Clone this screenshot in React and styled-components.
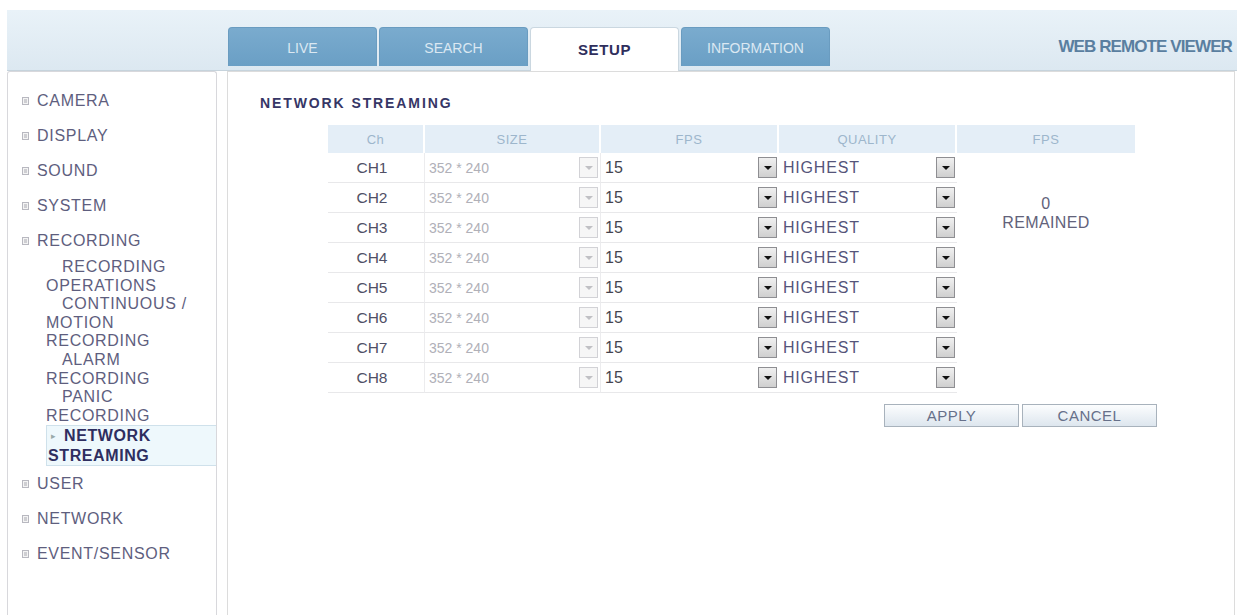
import React from "react";
import styled, { createGlobalStyle } from "styled-components";

const tabs = ["LIVE", "SEARCH", "SETUP", "INFORMATION"];
const channels = ["CH1", "CH2", "CH3", "CH4", "CH5", "CH6", "CH7", "CH8"];
const subItems = [
    ["RECORDING", "OPERATIONS"],
    ["CONTINUOUS /", "MOTION", "RECORDING"],
    ["ALARM", "RECORDING"],
    ["PANIC", "RECORDING"],
];

const PlusBox = () => (
    <svg width="7" height="8" viewBox="0 0 7 8">
        <rect x="0.5" y="0.5" width="6" height="7" fill="#f4f4f4" stroke="#b8b8c0" />
        <line x1="2" y1="3" x2="5" y2="3" stroke="#a8a8b0" />
        <line x1="2" y1="5" x2="5" y2="5" stroke="#a8a8b0" />
    </svg>
);

export default function App() {
    return <Page>
        <GlobalStyle />
        <Header>
            <Tabs>
                {tabs.map(t => <Tab key={t} $active={t === "SETUP"}>{t}</Tab>)}
            </Tabs>
            <Brand>WEB REMOTE VIEWER</Brand>
        </Header>
        <Body>
            <Sidebar>
                {["CAMERA", "DISPLAY", "SOUND", "SYSTEM", "RECORDING"].map(m => (
                    <MenuItem key={m}><PlusBox />{m}</MenuItem>
                ))}
                <SubList>
                    {subItems.map((lines, i) => (
                        <SubItem key={i}>
                            {lines.map((l, j) => <SubLine key={j} $first={j === 0}>{l}</SubLine>)}
                        </SubItem>
                    ))}
                    <SelectedItem>
                        <SubLine $first><Arrow>▸</Arrow>NETWORK</SubLine>
                        <SubLine>STREAMING</SubLine>
                    </SelectedItem>
                </SubList>
                {["USER", "NETWORK", "EVENT/SENSOR"].map(m => (
                    <MenuItem key={m}><PlusBox />{m}</MenuItem>
                ))}
            </Sidebar>
            <Main>
                <Title>NETWORK STREAMING</Title>
                <Table>
                    {["Ch", "SIZE", "FPS", "QUALITY", "FPS"].map((h, i) => (
                        <HeadCell key={i} $last={i === 4}>{h}</HeadCell>
                    ))}
                    {channels.map((ch, i) => (
                        <React.Fragment key={ch}>
                            <ChCell style={{gridRow: i + 2}}>{ch}</ChCell>
                            <SelectCell style={{gridRow: i + 2}} $muted $sep>
                                352 * 240<DropButton $disabled />
                            </SelectCell>
                            <SelectCell style={{gridRow: i + 2}}>
                                15<DropButton />
                            </SelectCell>
                            <SelectCell style={{gridRow: i + 2}} $quality>
                                HIGHEST<DropButton />
                            </SelectCell>
                        </React.Fragment>
                    ))}
                    <Remained>
                        <span>0</span>
                        <span>REMAINED</span>
                    </Remained>
                </Table>
                <Actions>
                    <ActionButton>APPLY</ActionButton>
                    <ActionButton>CANCEL</ActionButton>
                </Actions>
            </Main>
        </Body>
    </Page>
}

const GlobalStyle = createGlobalStyle`
    html, body {
        margin: 0;
        height: 100%;
        overflow: hidden;
        background: #fff;
    }
    body {
        font-family: "Liberation Sans", Arial, sans-serif;
    }
    #root {
        height: 100%;
    }
`;

const Page = styled.div`
    height: 100%;
    box-sizing: border-box;
    padding: 10px 0 0 7px;
    display: flex;
    flex-direction: column;
`;

const Header = styled.div`
    height: 60px;
    flex-shrink: 0;
    display: flex;
    align-items: flex-end;
    background: linear-gradient(#e9f2f8, #dce8f1);
    border-bottom: 1px solid #c6d3dc;
`;

const Tabs = styled.div`
    display: flex;
    gap: 2px;
    margin-left: 221px;
`;

const Tab = styled.div`
    width: 149px;
    height: ${p => p.$active ? 44 : 39}px;
    box-sizing: border-box;
    display: flex;
    align-items: center;
    justify-content: center;
    padding-top: ${p => p.$active ? 0 : 1}px;
    border-radius: 4px 4px 0 0;
    margin-bottom: ${p => p.$active ? -1 : 0}px;
    background: ${p => p.$active ? "#fff" : "linear-gradient(#7aabce, #6a9fc5)"};
    border: 1px solid ${p => p.$active ? "#cad7e0" : "#6a9cc0"};
    border-bottom: none;
    color: ${p => p.$active ? "#2e2e5c" : "#dbe8f2"};
    font-size: ${p => p.$active ? 15 : 14}px;
    font-weight: ${p => p.$active ? "bold" : "normal"};
    letter-spacing: ${p => p.$active ? 0.6 : 0}px;
`;

const Brand = styled.div`
    margin-left: auto;
    margin-bottom: 13px;
    padding-right: 5px;
    color: #5a7fa0;
    font-size: 17px;
    font-weight: bold;
    letter-spacing: -0.9px;
`;

const Body = styled.div`
    flex: 1;
    display: flex;
    gap: 10px;
    margin-right: 2px;
    min-height: 0;
`;

const Sidebar = styled.div`
    width: 210px;
    flex-shrink: 0;
    box-sizing: border-box;
    border: 1px solid #d8d8dc;
    border-bottom: none;
    border-radius: 3px 3px 0 0;
    padding-top: 11px;
    color: #5e5e7e;
    font-size: 16px;
    letter-spacing: 0.7px;
`;

const MenuItem = styled.div`
    height: 35px;
    display: flex;
    align-items: center;
    gap: 8px;
    padding-left: 14px;
`;

const SubList = styled.div`
    margin-left: 38px;
    line-height: 18.6px;
`;

const SubItem = styled.div``;

const SubLine = styled.div`
    padding-left: ${p => p.$first ? 16 : 0}px;
    white-space: nowrap;
`;

const SelectedItem = styled.div`
    border: 1px solid #cfe1eb;
    border-right: none;
    background: #eef8fc;
    color: #2e2e60;
    font-weight: bold;
    line-height: 19px;
    letter-spacing: 0.6px;
    padding-left: 1px;
    ${SubLine} {
        padding-left: 0;
    }
    ${SubLine}:first-child {
        padding-left: 3px;
    }
`;

const Arrow = styled.span`
    display: inline-block;
    width: 13px;
    color: #9aa;
    font-size: 9px;
    font-weight: normal;
    vertical-align: 2px;
`;

const Main = styled.div`
    flex: 1;
    box-sizing: border-box;
    border: 1px solid #dcdcdc;
    border-bottom: none;
    padding: 23px 0 0 32px;
`;

const Title = styled.div`
    font-size: 14px;
    line-height: 16px;
    font-weight: bold;
    color: #363666;
    letter-spacing: 1.9px;
`;

const Table = styled.div`
    margin: 14px 0 0 68px;
    display: grid;
    grid-template-columns: 97px 176px 178px 178px 178px;
    grid-template-rows: 28px repeat(8, 30px);
    width: max-content;
`;

const HeadCell = styled.div`
    display: flex;
    align-items: center;
    justify-content: center;
    background: #e4eef7;
    border-right: ${p => p.$last ? "none" : "2px solid #fff"};
    color: #9db6cc;
    font-size: 13px;
    letter-spacing: 0.5px;
`;

const ChCell = styled.div`
    grid-column: 1;
    display: flex;
    align-items: center;
    justify-content: center;
    padding-right: 8px;
    border-bottom: 1px solid #e8e8ea;
    border-right: 1px solid #ececee;
    color: #505066;
    font-size: 15.5px;
`;

const SelectCell = styled.div`
    display: flex;
    align-items: center;
    justify-content: space-between;
    padding: 0 2px 0 4px;
    border-bottom: 1px solid #e8e8ea;
    border-right: ${p => p.$sep ? "1px solid #ececee" : "none"};
    color: ${p => p.$muted ? "#b0b0b8" : p.$quality ? "#55557a" : "#44444f"};
    font-size: ${p => p.$muted ? 14 : 16}px;
    letter-spacing: ${p => p.$quality ? 0.8 : 0}px;
`;

const DropButton = styled.span`
    width: 19px;
    height: 21px;
    box-sizing: border-box;
    display: flex;
    align-items: center;
    justify-content: center;
    border: 1px solid ${p => p.$disabled ? "#d2d2d6" : "#8e8e92"};
    background: ${p => p.$disabled ? "#f6f6f6" : "linear-gradient(#f0f0f0, #cfcfcf)"};
    &::after {
        content: "";
        border-left: 4px solid transparent;
        border-right: 4px solid transparent;
        border-top: 4px solid ${p => p.$disabled ? "#c0c0c4" : "#111"};
    }
`;

const Remained = styled.div`
    grid-column: 5;
    grid-row: 2 / span 4;
    display: flex;
    flex-direction: column;
    align-items: center;
    justify-content: center;
    line-height: 19px;
    color: #62627a;
    font-size: 16px;
    letter-spacing: 0.4px;
`;

const Actions = styled.div`
    display: flex;
    gap: 3px;
    margin: 11px 0 0 624px;
`;

const ActionButton = styled.button`
    width: 135px;
    height: 23px;
    border: 1px solid #a8b2bc;
    background: linear-gradient(#fcfdfe, #dde6ee);
    color: #66708a;
    font-family: "Liberation Sans", Arial, sans-serif;
    font-size: 15px;
    letter-spacing: 0.5px;
    padding: 0;
`;
